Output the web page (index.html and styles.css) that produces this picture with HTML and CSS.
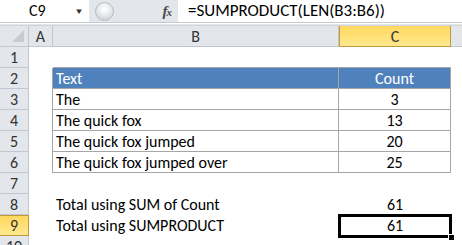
FILE: index.html
```html
<!DOCTYPE html>
<html>
<head>
<meta charset="utf-8">
<link rel="stylesheet" href="styles.css">
</head>
<body>
<div class="formula-bar">
  <div class="name-box"><span class="ref">C9</span><span class="drop">&#9660;</span></div>
  <div class="fb-mid">
    <span class="grip"></span>
    <span class="fx"><i>f</i><i class="x">x</i></span>
  </div>
  <div class="formula">=SUMPRODUCT(LEN(B3:B6))</div>
</div>
<div class="fb-sep"></div>
<div class="sheet">
  <div class="hd corner"><span class="tri"></span></div>
  <div class="hd col">A</div>
  <div class="hd col">B</div>
  <div class="hd col sel">C</div>
  <div class="hd rest"></div>

  <div class="hd row">1</div><div class="c a edge-b"></div><div class="c edge-b"></div><div class="c edge-b"></div><div class="c"></div>

  <div class="hd row">2</div><div class="c a edge-r"></div><div class="c t head">Text</div><div class="c t head num">Count</div><div class="c"></div>
  <div class="hd row">3</div><div class="c a edge-r"></div><div class="c t">The</div><div class="c t num">3</div><div class="c"></div>
  <div class="hd row">4</div><div class="c a edge-r"></div><div class="c t">The quick fox</div><div class="c t num">13</div><div class="c"></div>
  <div class="hd row">5</div><div class="c a edge-r"></div><div class="c t">The quick fox jumped</div><div class="c t num">20</div><div class="c"></div>
  <div class="hd row">6</div><div class="c a edge-r"></div><div class="c t">The quick fox jumped over</div><div class="c t num">25</div><div class="c"></div>

  <div class="hd row">7</div><div class="c a"></div><div class="c"></div><div class="c"></div><div class="c"></div>
  <div class="hd row">8</div><div class="c a"></div><div class="c txt">Total using SUM of Count</div><div class="c num">61</div><div class="c"></div>
  <div class="hd row sel">9</div><div class="c a"></div><div class="c txt">Total using SUMPRODUCT</div><div class="c num active">61</div><div class="c"></div>
  <div class="hd row last">10</div><div class="c a"></div><div class="c"></div><div class="c"></div><div class="c"></div>
</div>
</body>
</html>
```

FILE: styles.css
```css
html, body {
  margin: 0;
  padding: 0;
  background: #ffffff;
  overflow: hidden;
}

body {
  width: 462px;
  height: 245px;
  font-family: Carlito, Calibri, Lato, "Liberation Sans", sans-serif;
  font-size: 16px;
  color: #000;
}

/* ---- formula bar ---- */
.formula-bar {
  display: flex;
  height: 22px;
  background: #e3e6ea;
}

.name-box {
  width: 89px;
  background: #fff;
  display: flex;
  align-items: center;
  position: relative;
}

.name-box .ref {
  margin-left: 29px;
  line-height: 22px;
}

.name-box .drop {
  margin-left: auto;
  margin-right: 6px;
  font-size: 8px;
  color: #333;
  transform: scaleX(1.2);
}

.fb-mid {
  width: 89px;
  display: flex;
  align-items: center;
}

.grip {
  width: 19px;
  height: 19px;
  margin-left: 6px;
  border-radius: 50%;
  box-sizing: border-box;
  border: 1px solid #b9bdc3;
  background: radial-gradient(circle at 50% 35%, #ffffff 0, #f1f2f4 30%, #d4d7dc 75%);
}

.fx {
  margin-left: auto;
  margin-right: 7px;
  font-family: "Liberation Serif", serif;
  font-style: italic;
  font-weight: bold;
  font-size: 15px;
  color: #4a4a4a;
  letter-spacing: -1px;
}

.fx .x {
  font-size: 11px;
}

.formula {
  flex: 1;
  background: #fff;
  padding-left: 10px;
  line-height: 22px;
  font-size: 17px;
  white-space: nowrap;
}

.fb-sep {
  height: 4px;
  box-sizing: border-box;
  background: #e3e6ea;
  border-top: 1px solid #c6cad0;
  border-bottom: 1px solid #d0d4d9;
  box-shadow: inset 0 1px 0 #fff;
}

/* ---- worksheet grid ---- */
.sheet {
  display: grid;
  grid-template-columns: 29px 24px 286px 112px 11px;
  grid-auto-rows: 21px;
}

.hd {
  box-sizing: border-box;
  background: #e3e6ea;
  border-right: 1px solid #c3c7cd;
  border-bottom: 1px solid #c3c7cd;
  color: #333;
  display: flex;
  align-items: center;
  justify-content: center;
}

.hd.last {
  align-items: flex-start;
  padding-top: 1px;
}

.hd.rest {
  border-right: none;
}

.hd.sel {
  background: linear-gradient(#ffd95e, #ffe88f);
  border: 1px solid #c39a3b;
  color: #333;
}

.hd.col.sel {
  border-top: none;
}

.hd.row.sel {
  border-left: none;
}

.corner {
  position: relative;
}

.corner .tri {
  position: absolute;
  right: 4px;
  bottom: 4px;
  width: 0;
  height: 0;
  border-left: 12px solid transparent;
  border-bottom: 12px solid #c8ccd1;
}

.c {
  box-sizing: border-box;
  display: flex;
  align-items: center;
  white-space: nowrap;
}

.edge-b {
  border-bottom: 1px solid #a6a6a6;
}

.c.a.edge-b {
  border-bottom: none;
}

.edge-r {
  border-right: 1px solid #a6a6a6;
}

.t {
  border-right: 1px solid #a6a6a6;
  border-bottom: 1px solid #a6a6a6;
  padding-left: 3px;
}

.txt {
  padding-left: 3px;
}

.head {
  background: #4f81bd;
  color: #fff;
}

.num {
  justify-content: center;
  padding-left: 0;
}

.active {
  position: relative;
}

.active::before {
  content: "";
  position: absolute;
  left: -1px;
  top: -1px;
  right: -1px;
  bottom: -2px;
  border: 3px solid #000;
}

.active::after {
  content: "";
  position: absolute;
  right: -4px;
  bottom: -5px;
  width: 5px;
  height: 5px;
  background: #000;
  border: 1px solid #fff;
}
```
